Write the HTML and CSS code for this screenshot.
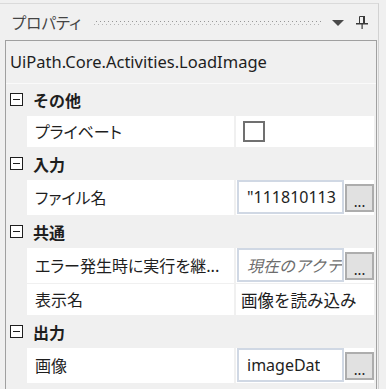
FILE: index.html
```html
<!DOCTYPE html>
<html lang="ja">
<head>
    <meta charset="UTF-8">
    <title>プロパティ</title>
    <link rel="stylesheet" href="styles.css">
</head>
<body>
    <div class="panel">
        <!-- タイトルバー -->
        <div class="titlebar">
            <span class="title">プロパティ</span>
            <svg class="grip" height="9">
                <defs>
                    <pattern id="dots" width="4" height="6" patternUnits="userSpaceOnUse">
                        <rect x="0" y="0" width="1" height="1" fill="#b4b4b4"/>
                        <rect x="2" y="3" width="1" height="1" fill="#969696"/>
                    </pattern>
                </defs>
                <rect x="0" y="1" width="100%" height="8" fill="url(#dots)"/>
            </svg>
            <svg class="arrow" width="12" height="6" viewBox="0 0 12 6">
                <path d="M0 0 H12 L6 6 Z" fill="#4a4a4a"/>
            </svg>
            <svg class="pin" width="12" height="13" viewBox="0 0 12 13">
                <path d="M3.5 0.5 V7.5 M8.5 0.5 V7.5 M3.5 0.5 H8.5" stroke="#3a3a3a" fill="none"/>
                <rect x="7" y="0" width="2" height="8" fill="#3a3a3a"/>
                <rect x="0" y="7" width="12" height="1.5" fill="#3a3a3a"/>
                <rect x="5.5" y="8" width="1.2" height="5" fill="#3a3a3a"/>
            </svg>
        </div>

        <!-- プロパティグリッド -->
        <div class="grid">
            <div class="typename">UiPath.Core.Activities.LoadImage</div>
            <div class="rows">
                <div class="category"><span class="toggle"></span>その他</div>
                <div class="prop">
                    <div class="name">プライベート</div>
                    <div class="value"><span class="checkbox"></span></div>
                </div>

                <div class="category"><span class="toggle"></span>入力</div>
                <div class="prop edit">
                    <div class="name">ファイル名</div>
                    <div class="value">
                        <div class="textbox"><span>"111810113</span></div>
                        <div class="dots-btn">...</div>
                    </div>
                </div>

                <div class="category"><span class="toggle"></span>共通</div>
                <div class="prop edit">
                    <div class="name">エラー発生時に実行を継...</div>
                    <div class="value">
                        <div class="textbox placeholder"><span>現在のアクテ</span></div>
                        <div class="dots-btn">...</div>
                    </div>
                </div>
                <div class="prop">
                    <div class="name">表示名</div>
                    <div class="value">画像を読み込み</div>
                </div>

                <div class="category"><span class="toggle"></span>出力</div>
                <div class="prop edit">
                    <div class="name">画像</div>
                    <div class="value">
                        <div class="textbox"><span>imageDat</span></div>
                        <div class="dots-btn">...</div>
                    </div>
                </div>
            </div>
        </div>
    </div>
</body>
</html>
```

FILE: styles.css
```css
body {
    margin: 0;
    padding-top: 3px;
    background-color: #f0f0f0;
    font-family: "Noto Sans", "Noto Sans CJK JP", sans-serif;
    color: #1e1e1e;
    overflow: hidden;
}
.panel {
    width: 379px;
    height: 400px;
    box-sizing: border-box;
    border-top: 1px solid #dadada;
    border-right: 1px solid #d2d2d2;
    background-color: #f0f0f0;
}
.titlebar {
    height: 36px;
    display: flex;
    align-items: center;
    padding-left: 12px;
}
.title {
    font-family: "Noto Sans CJK JP", sans-serif;
    font-size: 15.5px;
    color: #444;
    font-feature-settings: "palt";
}
.grip {
    flex: 1;
    margin: 0 10px 0 13px;
}
.arrow {
    margin-top: 1px;
    margin-right: 12px;
}
.pin {
    margin-right: 10px;
}
.grid {
    margin-left: 5px;
    width: 372px;
    height: 360px;
    box-sizing: border-box;
    border: 1px solid #a0a0a0;
    border-bottom: none;
}
.typename {
    height: 42px;
    line-height: 42px;
    padding-left: 4px;
    font-size: 16.5px;
    border-bottom: 1px solid #fafafa;
}
.rows {
    display: flex;
    flex-direction: column;
    gap: 1px;
}
.category {
    height: 31px;
    display: flex;
    align-items: center;
    font-family: "Noto Sans CJK JP", sans-serif;
    font-weight: bold;
    font-size: 16px;
}
.toggle {
    position: relative;
    width: 11px;
    height: 11px;
    margin-left: 4px;
    margin-right: 10px;
    border: 1px solid #1e1e1e;
    background-color: #fff;
}
.toggle::after {
    content: "";
    position: absolute;
    left: 2px;
    top: 5px;
    width: 7px;
    height: 1px;
    background-color: #1e1e1e;
}
.prop {
    display: grid;
    grid-template-columns: 207px 138px;
    column-gap: 2px;
    margin-left: 21px;
    height: 31px;
    font-size: 16px;
}
.prop.edit {
    height: 35px;
}
.name, .value {
    background-color: #fff;
    white-space: nowrap;
    overflow: hidden;
}
.name {
    padding-left: 8px;
    line-height: 31px;
    font-family: "Noto Sans CJK JP", sans-serif;
    font-feature-settings: "palt";
}
.edit .name {
    line-height: 35px;
}
.value {
    display: flex;
    align-items: center;
    padding-left: 5px;
    font-size: 16.5px;
    font-family: "Noto Sans CJK JP", sans-serif;
}
.edit .value {
    padding: 0 0 0 1px;
    align-items: stretch;
}
.checkbox {
    width: 18px;
    height: 17px;
    margin-left: 2px;
    border: 2px solid #707070;
    background-color: #fff;
}
.textbox {
    width: 107px;
    box-sizing: border-box;
    margin: 0 0 1px 0;
    border: 2px solid #d0d8e4;
    padding-left: 8px;
    display: flex;
    align-items: center;
    overflow: hidden;
    white-space: nowrap;
    font-size: 16px;
    font-family: "Noto Sans", "Noto Sans CJK JP", sans-serif;
}
.textbox span {
    overflow: hidden;
}
.textbox.placeholder {
    font-style: italic;
    color: #6d6d6d;
    font-family: "Noto Sans CJK JP", sans-serif;
}
.dots-btn {
    width: 29px;
    box-sizing: border-box;
    margin: 4px 0 3px 1px;
    border: 2px solid #adadad;
    background-color: #e1e1e1;
    font-size: 14px;
    text-align: center;
    line-height: 30px;
}
```
